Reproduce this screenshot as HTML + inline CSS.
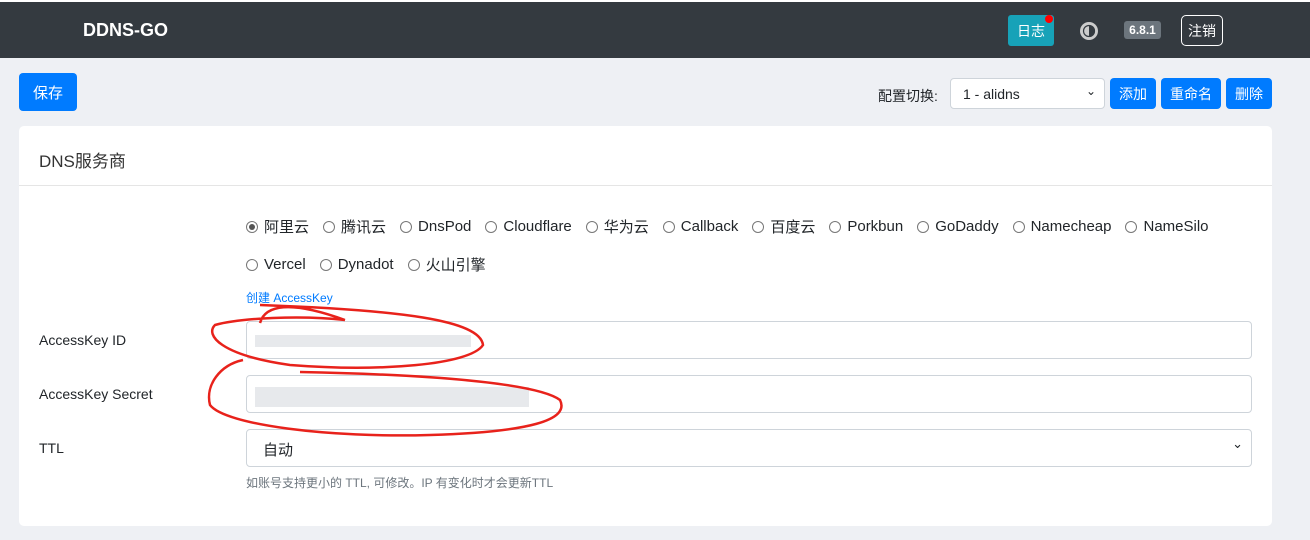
<!DOCTYPE html>
<html><head><meta charset="utf-8"><style>
*{box-sizing:border-box}
html,body{margin:0;width:1310px;height:540px;overflow:hidden}
body{background:#eef0f4;font-family:"Liberation Sans","Noto Sans CJK SC",sans-serif;position:relative;color:#212529}
.nav{position:absolute;top:2px;left:0;width:1310px;height:56px;background:#343a40}
.abs{position:absolute}
.btn{position:absolute;background:#007bff;color:#fff;border-radius:4px;display:flex;align-items:center;justify-content:center;font-size:14px}
.card{position:absolute;left:19px;top:126px;width:1253px;height:400px;background:#fff;border-radius:5px}
.radio{display:inline-flex;align-items:center;font-size:15px;margin-right:14px}
.radio i{width:12px;height:12px;border:1px solid #777;border-radius:50%;margin-right:6px;display:inline-block;position:relative}
.radio i.on::after{content:"";position:absolute;left:2px;top:2px;width:6px;height:6px;border-radius:50%;background:#555}
.inp{position:absolute;left:246px;width:1006px;height:38px;border:1px solid #ced4da;border-radius:4px;background:#fff}
.lbl{position:absolute;left:39px;font-size:14px}
</style></head><body>
<div class="abs" style="top:0;left:0;width:1310px;height:2px;background:#fff"></div>
<div class="nav">
 <div class="abs" style="left:83px;top:18px;color:#fff;font-weight:bold;font-size:18px">DDNS-GO</div>
 <div class="abs" style="left:1008px;top:13px;width:46px;height:31px;background:#17a2b8;border-radius:3px;color:#fff;font-size:14px;display:flex;align-items:center;justify-content:center">日志</div>
 <div class="abs" style="left:1045px;top:13px;width:8px;height:8px;background:#f00;border-radius:50%"></div>
 <svg class="abs" style="left:1079px;top:19px" width="20" height="20" viewBox="0 0 20 20"><circle cx="10" cy="10" r="9" fill="#ccc"/><path d="M10 4a6 6 0 0 1 0 12z" fill="#343a40"/><circle cx="10" cy="10" r="5.5" fill="none" stroke="#343a40" stroke-width="1.2"/></svg>
 <div class="abs" style="left:1124px;top:19px;width:37px;height:18px;background:#6c757d;border-radius:3px;color:#fff;font-size:12px;font-weight:bold;display:flex;align-items:center;justify-content:center">6.8.1</div>
 <div class="abs" style="left:1181px;top:13px;width:42px;height:31px;border:1px solid #fff;border-radius:5px;color:#fff;font-size:14px;display:flex;align-items:center;justify-content:center">注销</div>
</div>
<div class="btn" style="left:19px;top:73px;width:58px;height:38px;font-size:15px">保存</div>
<div class="abs" style="left:878px;top:86px;font-size:14px">配置切换:</div>
<div class="abs" style="left:950px;top:78px;width:155px;height:31px;border:1px solid #ced4da;border-radius:4px;background:#fff;font-size:14px;padding:7px 12px">1 - alidns<span style="position:absolute;right:8px;top:5px;font-size:12px">⌄</span></div>
<div class="btn" style="left:1110px;top:78px;width:46px;height:31px">添加</div>
<div class="btn" style="left:1161px;top:78px;width:60px;height:31px">重命名</div>
<div class="btn" style="left:1226px;top:78px;width:46px;height:31px">删除</div>
<div class="card">
 <div class="abs" style="left:20px;top:21px;font-size:17px;color:#333">DNS服务商</div>
 <div class="abs" style="left:0;top:59px;width:1253px;height:1px;background:#e5e5e5"></div>
 <div class="abs" style="left:227px;top:90px;white-space:nowrap">
  <span class="radio"><i class="on"></i>阿里云</span><span class="radio"><i></i>腾讯云</span><span class="radio"><i></i>DnsPod</span><span class="radio"><i></i>Cloudflare</span><span class="radio"><i></i>华为云</span><span class="radio"><i></i>Callback</span><span class="radio"><i></i>百度云</span><span class="radio"><i></i>Porkbun</span><span class="radio"><i></i>GoDaddy</span><span class="radio"><i></i>Namecheap</span><span class="radio"><i></i>NameSilo</span>
 </div>
 <div class="abs" style="left:227px;top:128px;white-space:nowrap">
  <span class="radio"><i></i>Vercel</span><span class="radio"><i></i>Dynadot</span><span class="radio"><i></i>火山引擎</span>
 </div>
 <div class="abs" style="left:227px;top:163px;font-size:12px;color:#007bff">创建 AccessKey</div>
</div>
<div class="lbl" style="top:332px">AccessKey ID</div>
<div class="inp" style="top:321px"><div class="abs" style="left:8px;top:13px;width:216px;height:12px;background:#dde0e4;opacity:.7"></div></div>
<div class="lbl" style="top:386px">AccessKey Secret</div>
<div class="inp" style="top:375px"><div class="abs" style="left:8px;top:11px;width:274px;height:20px;background:#dde0e4;opacity:.7"></div></div>
<div class="lbl" style="top:440px">TTL</div>
<div class="inp" style="top:429px;font-size:15px;padding:9px 16px">自动<span style="position:absolute;right:8px;top:6px;font-size:13px">⌄</span></div>
<div class="abs" style="left:246px;top:474px;font-size:12px;color:#6c757d">如账号支持更小的 TTL, 可修改。IP 有变化时才会更新TTL</div>
<svg class="abs" style="left:0;top:0" width="1310" height="540" fill="none" stroke="#e8221b" stroke-width="2.5">
<path d="M260 323C265 305 290 300 345 320M345 320C300 315 240 318 215 325C205 335 220 355 290 365C380 372 470 365 483 345C480 320 400 310 260 305"/>
<path d="M243 360C220 365 205 385 210 405C225 425 330 438 430 435C530 432 570 420 560 400C540 385 450 375 300 372"/>
</svg>
</body></html>
